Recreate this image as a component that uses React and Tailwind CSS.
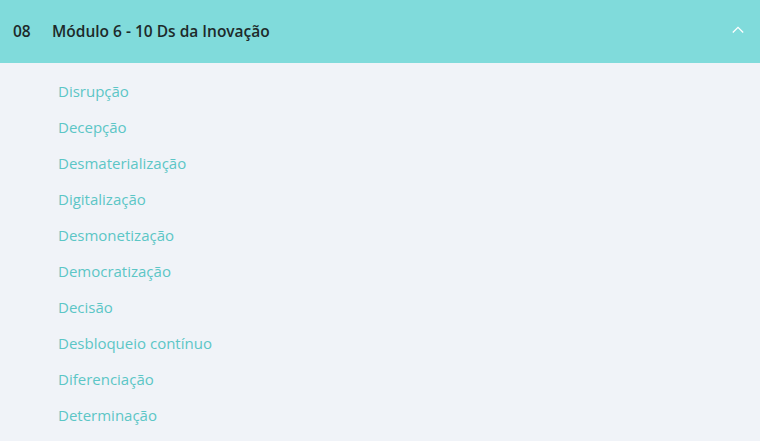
export default function App() {
  const items = [
    "Disrupção",
    "Decepção",
    "Desmaterialização",
    "Digitalização",
    "Desmonetização",
    "Democratização",
    "Decisão",
    "Desbloqueio contínuo",
    "Diferenciação",
    "Determinação",
  ];
  return (
    <div className="w-[760px] h-[441px] overflow-hidden bg-[#f0f3f8]" style={{ fontFamily: "'Open Sans', Lato, sans-serif" }}>
      <div className="h-[63px] bg-[#80dbdb] flex items-center pl-[13px] pr-[16px]">
        <span className="text-[15.5px] font-semibold text-[#1d2a2a] w-[39px]">08</span>
        <span className="text-[15.5px] font-semibold text-[#1d2a2a]">Módulo 6 - 10 Ds da Inovação</span>
        <svg className="ml-auto mb-[4px]" width="12" height="8" viewBox="0 0 12 8" fill="none">
          <path d="M0.8 6.5L6 1.3L11.2 6.5" stroke="white" strokeWidth="1.3" />
        </svg>
      </div>
      <ul className="pt-[10px] pl-[58px]">
        {items.map((t) => (
          <li key={t} className="h-[36px] flex items-center text-[15px] text-[#5cc6c6]">
            {t}
          </li>
        ))}
      </ul>
    </div>
  );
}
